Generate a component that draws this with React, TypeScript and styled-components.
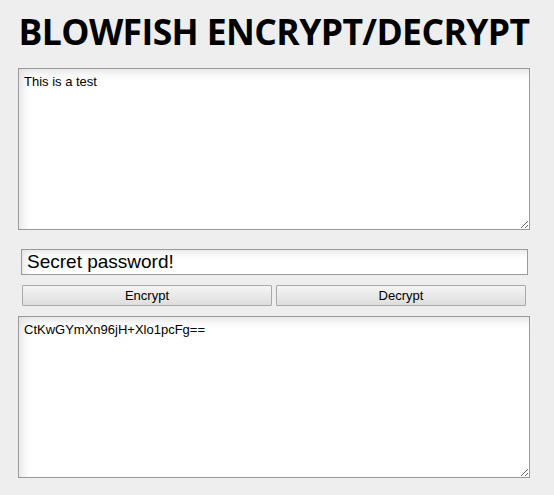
import React, { useState } from "react";
import styled, { createGlobalStyle } from "styled-components";

const Global = createGlobalStyle`
  html, body { margin: 0; padding: 0; background: #eeeeee; }
  body { font-family: "Liberation Sans", Arial, sans-serif; }
`;

const Page = styled.div`
  display: flex;
  flex-direction: column;
  width: 512px;
  padding-left: 18px;
  padding-top: 8px;
`;

const Title = styled.h1`
  margin: 0;
  font-family: "Open Sans", sans-serif;
  font-weight: 700;
  font-size: 35.5px;
  line-height: 46px;
  letter-spacing: -0.6px;
  color: #000;
  text-align: center;
  white-space: nowrap;
`;

const TextArea = styled.textarea<{ $top: number }>`
  box-sizing: border-box;
  width: 512px;
  height: 162px;
  margin: ${(p) => p.$top}px 0 0 0;
  padding: 5px 5px;
  border: 1px solid #9a9a9a;
  background: #fff;
  box-shadow: inset 6px 6px 12px -4px rgba(0, 0, 0, 0.14);
  font-family: "Liberation Sans", Arial, sans-serif;
  font-size: 13px;
  line-height: 15px;
  color: #000;
  outline: none;
  resize: both;
`;

const Password = styled.input`
  box-sizing: border-box;
  width: 507px;
  height: 26px;
  margin: 19px 0 0 3px;
  padding: 0 5px;
  border: 1px solid #9a9a9a;
  background: #fff;
  box-shadow: inset 5px 5px 10px -4px rgba(0, 0, 0, 0.14);
  font-family: "Liberation Sans", Arial, sans-serif;
  font-size: 19px;
  color: #000;
  outline: none;
`;

const ButtonRow = styled.div`
  display: grid;
  grid-template-columns: 1fr 1fr;
  gap: 4px;
  width: 504px;
  margin: 10px 0 0 4px;
`;

const Button = styled.button`
  box-sizing: border-box;
  height: 21px;
  padding: 0;
  border: 1px solid #a9a9a9;
  border-radius: 1px;
  background: linear-gradient(#f4f4f4, #dedede);
  font-family: "Liberation Sans", Arial, sans-serif;
  font-size: 13px;
  color: #000;
  cursor: pointer;
`;

export default function App() {
  const [plain, setPlain] = useState("This is a test");
  const [pass, setPass] = useState("Secret password!");
  const [out, setOut] = useState("CtKwGYmXn96jH+Xlo1pcFg==");
  return (
    <>
      <Global />
      <Page>
        <Title>BLOWFISH ENCRYPT/DECRYPT</Title>
        <TextArea $top={14} value={plain} onChange={(e) => setPlain(e.target.value)} />
        <Password value={pass} onChange={(e) => setPass(e.target.value)} />
        <ButtonRow>
          <Button>Encrypt</Button>
          <Button>Decrypt</Button>
        </ButtonRow>
        <TextArea $top={10} value={out} onChange={(e) => setOut(e.target.value)} />
      </Page>
    </>
  );
}
